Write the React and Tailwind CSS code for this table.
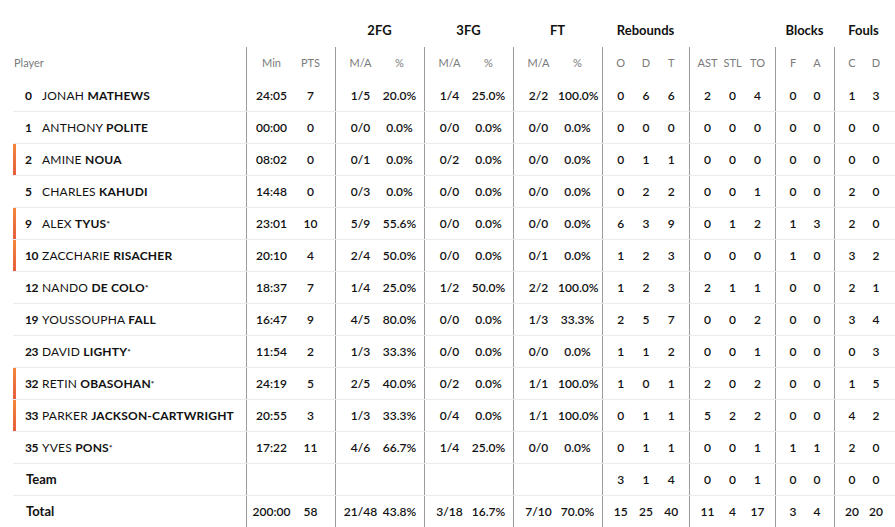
import React from 'react';

const players = [
  { no: '0', first: 'JONAH', last: 'MATHEWS', min: '24:05', pts: '7', fg2: ['1/5', '20.0%'], fg3: ['1/4', '25.0%'], ft: ['2/2', '100.0%'], reb: ['0', '6', '6'], misc: ['2', '0', '4'], blk: ['0', '0'], fls: ['1', '3'] },
  { no: '1', first: 'ANTHONY', last: 'POLITE', min: '00:00', pts: '0', fg2: ['0/0', '0.0%'], fg3: ['0/0', '0.0%'], ft: ['0/0', '0.0%'], reb: ['0', '0', '0'], misc: ['0', '0', '0'], blk: ['0', '0'], fls: ['0', '0'] },
  { no: '2', first: 'AMINE', last: 'NOUA', bar: true, min: '08:02', pts: '0', fg2: ['0/1', '0.0%'], fg3: ['0/2', '0.0%'], ft: ['0/0', '0.0%'], reb: ['0', '1', '1'], misc: ['0', '0', '0'], blk: ['0', '0'], fls: ['0', '0'] },
  { no: '5', first: 'CHARLES', last: 'KAHUDI', min: '14:48', pts: '0', fg2: ['0/3', '0.0%'], fg3: ['0/0', '0.0%'], ft: ['0/0', '0.0%'], reb: ['0', '2', '2'], misc: ['0', '0', '1'], blk: ['0', '0'], fls: ['2', '0'] },
  { no: '9', first: 'ALEX', last: 'TYUS', star: true, bar: true, min: '23:01', pts: '10', fg2: ['5/9', '55.6%'], fg3: ['0/0', '0.0%'], ft: ['0/0', '0.0%'], reb: ['6', '3', '9'], misc: ['0', '1', '2'], blk: ['1', '3'], fls: ['2', '0'] },
  { no: '10', first: 'ZACCHARIE', last: 'RISACHER', bar: true, min: '20:10', pts: '4', fg2: ['2/4', '50.0%'], fg3: ['0/0', '0.0%'], ft: ['0/1', '0.0%'], reb: ['1', '2', '3'], misc: ['0', '0', '0'], blk: ['1', '0'], fls: ['3', '2'] },
  { no: '12', first: 'NANDO', last: 'DE COLO', star: true, min: '18:37', pts: '7', fg2: ['1/4', '25.0%'], fg3: ['1/2', '50.0%'], ft: ['2/2', '100.0%'], reb: ['1', '2', '3'], misc: ['2', '1', '1'], blk: ['0', '0'], fls: ['2', '1'] },
  { no: '19', first: 'YOUSSOUPHA', last: 'FALL', min: '16:47', pts: '9', fg2: ['4/5', '80.0%'], fg3: ['0/0', '0.0%'], ft: ['1/3', '33.3%'], reb: ['2', '5', '7'], misc: ['0', '0', '2'], blk: ['0', '0'], fls: ['3', '4'] },
  { no: '23', first: 'DAVID', last: 'LIGHTY', star: true, min: '11:54', pts: '2', fg2: ['1/3', '33.3%'], fg3: ['0/0', '0.0%'], ft: ['0/0', '0.0%'], reb: ['1', '1', '2'], misc: ['0', '0', '1'], blk: ['0', '0'], fls: ['0', '3'] },
  { no: '32', first: 'RETIN', last: 'OBASOHAN', star: true, bar: true, min: '24:19', pts: '5', fg2: ['2/5', '40.0%'], fg3: ['0/2', '0.0%'], ft: ['1/1', '100.0%'], reb: ['1', '0', '1'], misc: ['2', '0', '2'], blk: ['0', '0'], fls: ['1', '5'] },
  { no: '33', first: 'PARKER', last: 'JACKSON-CARTWRIGHT', bar: true, min: '20:55', pts: '3', fg2: ['1/3', '33.3%'], fg3: ['0/4', '0.0%'], ft: ['1/1', '100.0%'], reb: ['0', '1', '1'], misc: ['5', '2', '2'], blk: ['0', '0'], fls: ['4', '2'] },
  { no: '35', first: 'YVES', last: 'PONS', star: true, min: '17:22', pts: '11', fg2: ['4/6', '66.7%'], fg3: ['1/4', '25.0%'], ft: ['0/0', '0.0%'], reb: ['0', '1', '1'], misc: ['0', '0', '1'], blk: ['1', '1'], fls: ['2', '0'] },
];

const team = { min: '', pts: '', fg2: ['', ''], fg3: ['', ''], ft: ['', ''], reb: ['3', '1', '4'], misc: ['0', '0', '1'], blk: ['0', '0'], fls: ['0', '0'] };
const total = { min: '200:00', pts: '58', fg2: ['21/48', '43.8%'], fg3: ['3/18', '16.7%'], ft: ['7/10', '70.0%'], reb: ['15', '25', '40'], misc: ['11', '4', '17'], blk: ['3', '4'], fls: ['20', '20'] };

// group widths include the 1px left rule
const Group = ({ w, cols, values, muted }) => (
  <div className={`${w} border-l border-[#9a9a9a] px-[5px] grid ${cols} items-center`}>
    {values.map((v, i) => (
      <span
        key={i}
        className={`text-center ${muted ? 'text-[11px] text-[#7a7a7a] font-normal' : 'text-[12px] text-[#111] font-semibold'}`}
      >
        {v}
      </span>
    ))}
  </div>
);

const StatCells = ({ r, muted }) => (
  <>
    <Group w="w-[89px]" cols="grid-cols-2" values={[r.min, r.pts]} muted={muted} />
    <Group w="w-[89px]" cols="grid-cols-2" values={r.fg2} muted={muted} />
    <Group w="w-[89px]" cols="grid-cols-2" values={r.fg3} muted={muted} />
    <Group w="w-[89px]" cols="grid-cols-2" values={r.ft} muted={muted} />
    <Group w="w-[87px]" cols="grid-cols-3" values={r.reb} muted={muted} />
    <Group w="w-[86px]" cols="grid-cols-3" values={r.misc} muted={muted} />
    <Group w="w-[59px]" cols="grid-cols-2" values={r.blk} muted={muted} />
    <Group w="w-[59px]" cols="grid-cols-2" values={r.fls} muted={muted} />
  </>
);

const Bar = ({ on }) => (
  <div className={`w-[3px] self-stretch ${on ? 'bg-gradient-to-b from-[#f4863a] to-[#e95c3f]' : ''}`} />
);

export default function App() {
  return (
    <div
      className="w-[895px] h-[527px] overflow-hidden bg-white pt-[15px] pl-[13px]"
      style={{ fontFamily: 'Lato, "Open Sans", sans-serif' }}
    >
      {/* group titles */}
      <div className="flex h-8 items-center text-[13px] font-bold text-[#111]">
        <div className="w-[233px]" />
        <div className="w-[89px]" />
        <div className="w-[89px] text-center">2FG</div>
        <div className="w-[89px] text-center">3FG</div>
        <div className="w-[89px] text-center">FT</div>
        <div className="w-[87px] text-center">Rebounds</div>
        <div className="w-[86px]" />
        <div className="w-[59px] text-center">Blocks</div>
        <div className="w-[59px] text-center">Fouls</div>
      </div>

      {/* column labels */}
      <div className="flex h-[33px]">
        <div className="w-[233px] flex items-center pl-px text-[11px] text-[#7a7a7a]">Player</div>
        <StatCells
          muted
          r={{ min: 'Min', pts: 'PTS', fg2: ['M/A', '%'], fg3: ['M/A', '%'], ft: ['M/A', '%'], reb: ['O', 'D', 'T'], misc: ['AST', 'STL', 'TO'], blk: ['F', 'A'], fls: ['C', 'D'] }}
        />
      </div>

      {players.map((p) => (
        <div key={p.no} className="flex h-8 border-b border-[#ebebeb]">
          <div className="w-[233px] flex items-center text-[12px] tracking-[0.2px] text-[#111]">
            <Bar on={p.bar} />
            <span className="ml-[9px] w-[17px] shrink-0 font-bold tracking-[-0.4px] whitespace-nowrap">{p.no}</span>
            <span className="whitespace-nowrap">
              {p.first} <span className="font-bold">{p.last}</span>
              {p.star && <sup className="text-[8px] font-bold relative -top-[1px]">*</sup>}
            </span>
          </div>
          <StatCells r={p} />
        </div>
      ))}

      <div className="flex h-8 border-b border-[#ebebeb]">
        <div className="w-[233px] flex items-center pl-[13px] text-[13px] font-bold text-[#111]">Team</div>
        <StatCells r={team} />
      </div>
      <div className="flex h-8 border-b border-[#ebebeb]">
        <div className="w-[233px] flex items-center pl-[13px] text-[13px] font-bold text-[#111]">Total</div>
        <StatCells r={total} />
      </div>
    </div>
  );
}
